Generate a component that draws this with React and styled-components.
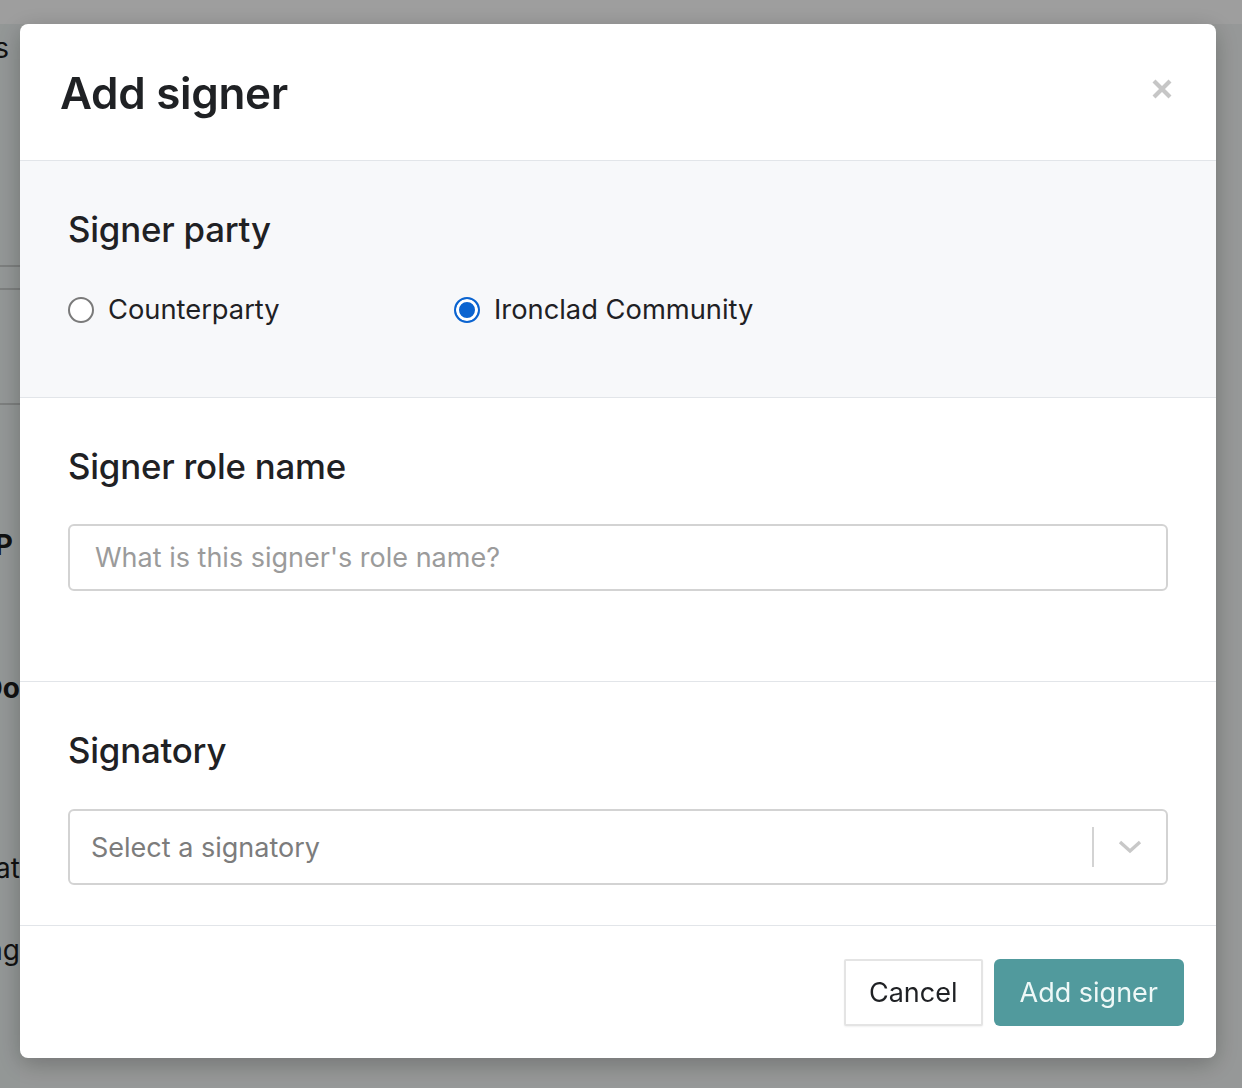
import styled, { createGlobalStyle } from 'styled-components';

const GlobalStyle = createGlobalStyle`
  html, body {
    margin: 0;
    padding: 0;
  }
  body {
    width: 1242px;
    height: 1088px;
    overflow: hidden;
    background: #f3f6f5;
    font-family: Inter, "Liberation Sans", Arial, sans-serif;
  }
`;

const Page = styled.div`
  height: 1088px;
  display: flex;
  flex-direction: column;
  font-family: Inter, "Liberation Sans", sans-serif;
`;

const PageTop = styled.div`
  height: 24px;
  background: #ffffff;
`;

const SideColumn = styled.div`
  width: 20px;
  flex: 1;
  overflow: hidden;
  display: flex;
  flex-direction: column;
  background: #eef4f3;
`;

const SideText = styled.div`
  height: 40px;
  margin-top: ${(p) => p.mt}px;
  display: flex;
  align-items: center;
  justify-content: flex-end;
  padding-right: ${(p) => p.pr || 0}px;
  white-space: nowrap;
  font-size: 28px;
  font-weight: ${(p) => (p.bold ? 700 : 400)};
  color: #1c1c1c;
`;

const SideRule = styled.div`
  height: 2px;
  flex-shrink: 0;
  margin-top: ${(p) => p.mt}px;
  background: #c9cdcc;
`;

const Overlay = styled.div`
  position: fixed;
  inset: 0;
  background: rgba(0, 0, 0, 0.38);
  padding: 24px 26px 30px 20px;
  display: flex;
`;

const Modal = styled.div`
  flex: 1;
  display: flex;
  flex-direction: column;
  background: #ffffff;
  border-radius: 8px;
  overflow: hidden;
  box-shadow: 0 6px 24px rgba(0, 0, 0, 0.25);
  color: #1f2124;
`;

const Header = styled.div`
  height: 137px;
  box-sizing: border-box;
  display: flex;
  align-items: center;
  justify-content: space-between;
  padding: 2px 42px 0 40px;
  border-bottom: 1px solid #e2e5e9;
`;

const Title = styled.h1`
  margin: 0;
  font-size: 44px;
  font-weight: 600;
  letter-spacing: -0.3px;
`;

const CloseButton = styled.button`
  border: none;
  background: transparent;
  padding: 0;
  width: 24px;
  height: 24px;
  margin-top: -8px;
  cursor: pointer;
`;

const Section = styled.section`
  height: ${(p) => p.h}px;
  box-sizing: border-box;
  padding: 44px 48px 0 48px;
  background: ${(p) => (p.muted ? '#f7f8fa' : '#ffffff')};
  border-bottom: 1px solid #e2e5e9;
  display: flex;
  flex-direction: column;
`;

const SectionTitle = styled.h2`
  margin: 0;
  font-size: 34.8px;
  font-weight: 500;
  letter-spacing: -0.2px;
  line-height: 48px;
`;

const RadioGroup = styled.div`
  display: grid;
  grid-template-columns: 386px auto;
  margin-top: 40px;
`;

const RadioLabel = styled.label`
  display: flex;
  align-items: center;
  gap: 14px;
  font-size: 27.3px;
  color: #1f2124;
`;

const Radio = styled.input`
  appearance: none;
  margin: 0;
  width: 26px;
  height: 26px;
  border-radius: 50%;
  box-sizing: border-box;
  border: 2px solid #7a7a7a;
  background: #ffffff;

  &:checked {
    border-color: #0b64d0;
    background: #0b64d0;
    box-shadow: inset 0 0 0 3px #ffffff;
  }
`;

const TextInput = styled.input`
  margin-top: 34px;
  height: 67px;
  box-sizing: border-box;
  border: 2px solid #d3d3d3;
  border-radius: 6px;
  padding: 0 25px;
  font-family: inherit;
  font-size: 27px;
  color: #1f2124;
  outline: none;

  &::placeholder {
    color: #9b9b9b;
  }
`;

const Select = styled.div`
  margin-top: 35px;
  height: 76px;
  box-sizing: border-box;
  border: 2px solid #d3d3d3;
  border-radius: 6px;
  display: flex;
  align-items: center;
`;

const SelectValue = styled.div`
  flex: 1;
  padding-left: 21px;
  font-size: 27px;
  color: #7c7c7c;
`;

const SelectIndicator = styled.div`
  width: 72px;
  height: 40px;
  border-left: 2px solid #d3d3d3;
  display: flex;
  align-items: center;
  justify-content: center;
`;

const Footer = styled.div`
  flex: 1;
  display: flex;
  justify-content: flex-end;
  align-items: center;
  gap: 11px;
  padding: 0 32px 0 0;
`;

const Button = styled.button`
  height: 67px;
  box-sizing: border-box;
  padding: ${(p) => (p.primary ? '0 26px' : '0 23px')};
  font-family: inherit;
  font-size: 27px;
  cursor: pointer;
  border-radius: ${(p) => (p.primary ? '6px' : '2px')};
  border: ${(p) => (p.primary ? 'none' : '2px solid #e4e4e4')};
  background: ${(p) => (p.primary ? '#519a9d' : '#ffffff')};
  color: ${(p) => (p.primary ? '#eef8f7' : '#1f2124')};
  box-shadow: ${(p) => (p.primary ? 'none' : '0 1px 2px rgba(0, 0, 0, 0.06)')};
`;

const CloseIcon = () => (
  <svg width="24" height="24" viewBox="0 0 24 24">
    <path d="M4 4 L20 20 M20 4 L4 20" stroke="#c6c6c6" strokeWidth="4.2" fill="none" />
  </svg>
);

const Chevron = () => (
  <svg width="26" height="16" viewBox="0 0 26 16">
    <path d="M3 3 L13 12 L23 3" stroke="#c8c8c8" strokeWidth="3.4" fill="none" />
  </svg>
);

const App = () => {
  return (
    <>
      <GlobalStyle />
      <Page>
        <PageTop />
        <SideColumn>
          <SideText mt={4} pr={11}>s</SideText>
          <SideRule mt={197} />
          <SideRule mt={21} />
          <SideRule mt={113} />
          <SideText mt={120} pr={7} bold>P</SideText>
          <SideText mt={103} bold>Do</SideText>
          <SideText mt={140}>at</SideText>
          <SideText mt={42}>ng</SideText>
        </SideColumn>
      </Page>
      <Overlay>
        <Modal role="dialog" aria-label="Add signer">
          <Header>
            <Title>Add signer</Title>
            <CloseButton aria-label="Close">
              <CloseIcon />
            </CloseButton>
          </Header>
          <Section h={237} muted>
            <SectionTitle>Signer party</SectionTitle>
            <RadioGroup>
              <RadioLabel>
                <Radio type="radio" name="party" />
                Counterparty
              </RadioLabel>
              <RadioLabel>
                <Radio type="radio" name="party" defaultChecked />
                Ironclad Community
              </RadioLabel>
            </RadioGroup>
          </Section>
          <Section h={284}>
            <SectionTitle>Signer role name</SectionTitle>
            <TextInput placeholder="What is this signer's role name?" />
          </Section>
          <Section h={244}>
            <SectionTitle>Signatory</SectionTitle>
            <Select>
              <SelectValue>Select a signatory</SelectValue>
              <SelectIndicator>
                <Chevron />
              </SelectIndicator>
            </Select>
          </Section>
          <Footer>
            <Button>Cancel</Button>
            <Button primary>Add signer</Button>
          </Footer>
        </Modal>
      </Overlay>
    </>
  );
};

export default App;
